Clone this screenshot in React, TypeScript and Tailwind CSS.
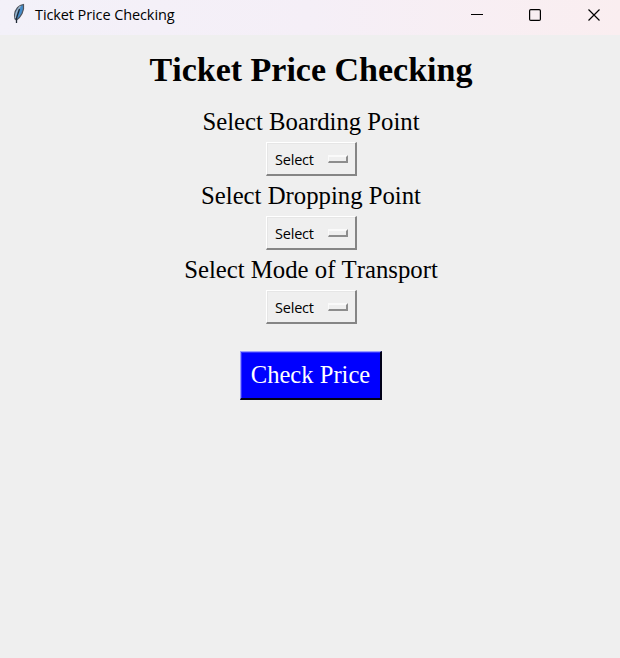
type FieldProps = { label: string };

function Field({ label }: FieldProps) {
  return (
    <div className="flex h-[74px] flex-col items-center">
      <label className="h-[38px] whitespace-nowrap text-[24.75px] leading-[36px]">{label}</label>
      <button
        type="button"
        className="ml-px flex h-[34px] w-[91px] items-center justify-between border-t border-r-2 border-b-2 border-l border-t-white border-r-[#858585] border-b-[#858585] border-l-white pr-[7px] pl-[8px] font-['Open_Sans',sans-serif] text-[14.5px] tracking-[-0.2px] shadow-[inset_1px_1px_#e6e6e6]"
      >
        <span className="mt-[2px] whitespace-nowrap">Select</span>
        <span className="h-[8px] w-5 border-t-2 border-r-2 border-b-2 border-l border-t-[#fafafa] border-r-[#8d8d8d] border-b-[#8d8d8d] border-l-[#fafafa]" />
      </button>
    </div>
  );
}

function Feather() {
  return (
    <svg className="mt-[3px] ml-[12px] h-[21px] w-[14px]" viewBox="0 0 14 21">
      <path d="M11.5 1.5C7 2 3 6 2.5 12L3 16l1.5 1C9 14 12.5 8 11.5 1.5Z" fill="#438bc9" stroke="#50545c" strokeWidth="1.2" />
      <path d="M8.5 3C5 7 3.500 11 3.500 15" fill="none" stroke="#a5b4c2" strokeWidth="1.2" />
      <path d="M7.5 6 4.500 15v5" fill="none" stroke="#202936" strokeWidth="1.3" />
    </svg>
  );
}

export default function App() {
  return (
    <div className="flex h-[658px] w-[620px] flex-col overflow-hidden bg-[#efefef] font-['Liberation_Serif',serif] text-black [font-kerning:none]">
      <header className="flex h-[35px] shrink-0 bg-linear-to-r from-[#f3f1f9] via-[#f5eff7] to-[#faeef0]">
        <Feather />
        <span className="ml-[9px] whitespace-nowrap font-['Open_Sans',sans-serif] text-[14.5px] leading-[30px] tracking-[-0.1px]">
          Ticket Price Checking
        </span>
        <svg className="ml-auto h-[35px] w-[160px]" viewBox="0 0 160 35" fill="none" stroke="#000">
          <path d="M11 14.5h12" />
          <rect x="69.6" y="9.6" width="10.8" height="10.8" rx="1.2" strokeWidth="1.2" />
          <path d="m128.5 9.5 11 11m0-11-11 11" strokeWidth="1.2" />
        </svg>
      </header>
      <main className="flex flex-col items-center pl-[2px]">
        <h1 className="mt-[15px] h-[54px] whitespace-nowrap text-[34px] leading-[40px] font-bold">Ticket Price Checking</h1>
        <Field label="Select Boarding Point" />
        <Field label="Select Dropping Point" />
        <Field label="Select Mode of Transport" />
        <button
          type="button"
          className="mt-[25px] h-[49px] w-[142px] whitespace-nowrap border-t border-r-2 border-b-2 border-l border-t-[#9c9cff] border-r-[#000018] border-b-[#000018] border-l-[#9c9cff] bg-[#0000ff] text-[24.6px] leading-[44px] text-white shadow-[inset_1px_1px_#3333ff]"
        >
          Check Price
        </button>
      </main>
    </div>
  );
}
